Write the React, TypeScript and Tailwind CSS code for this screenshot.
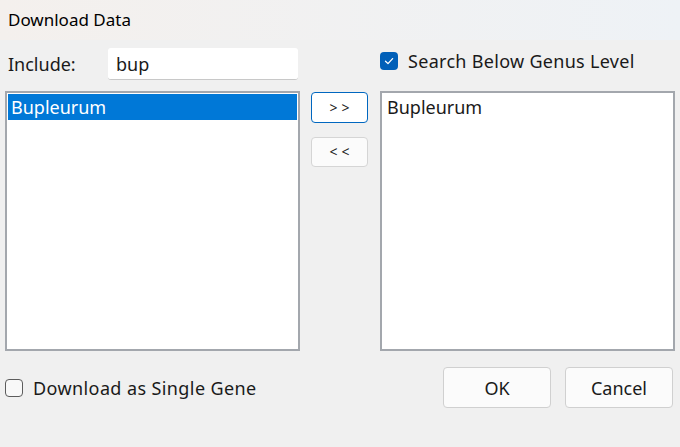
import React from "react";

export default function App() {
  const font = { fontFamily: '"Noto Sans", "Open Sans", sans-serif' };
  return (
    <div className="w-[680px] h-[447px] bg-[#f0f0f0] flex flex-col text-[18px] leading-[24px] text-[#1a1a1a] overflow-hidden" style={font}>
      <div className="h-[40px] shrink-0 flex items-center px-[8px] bg-gradient-to-r from-[#f4f0ed] to-[#eef2f6] text-[17px] text-black">
        Download Data
      </div>
      <div className="flex pl-[5px]">
        {/* left column */}
        <div className="w-[295px] flex flex-col pt-[8px]">
          <div className="flex items-center h-[32px]">
            <span className="pl-[3px] w-[103px]">Include:</span>
            <div className="w-[190px] h-[32px] bg-white rounded-[3px] border-b border-[#c8c8c8] flex items-center px-[8px]">bup</div>
          </div>
          <div className="mt-[11px] h-[260px] bg-white border-2 border-[#a3a7ad] p-[1px]">
            <div className="h-[26px] bg-[#0078d7] text-white flex items-center px-[3px]">Bupleurum</div>
          </div>
          <label className="mt-[28px] flex items-center gap-[10px] h-[18px]">
            <span className="w-[18px] h-[18px] shrink-0 rounded-[4px] border border-[#5c5c5c] bg-[#f8f8f8]" />
            <span className="whitespace-nowrap tracking-[0.4px]">Download as Single Gene</span>
          </label>
        </div>
        {/* middle column */}
        <div className="ml-[11px] w-[57px] flex flex-col pt-[52px]">
          <button className="h-[31px] rounded-[4px] border border-[#0067c0] bg-white text-[14px] tracking-[4px] pl-[4px] flex items-center justify-center">&gt;&gt;</button>
          <button className="mt-[14px] h-[30px] rounded-[4px] border border-[#d5d5d5] bg-[#fbfbfb] text-[14px] tracking-[4px] pl-[4px] flex items-center justify-center">&lt;&lt;</button>
        </div>
        {/* right column */}
        <div className="ml-[12px] w-[295px] flex flex-col pt-[12px]">
          <label className="flex items-center gap-[10px] h-[18px]">
            <span className="w-[18px] h-[18px] shrink-0 rounded-[4px] bg-[#005fb8] flex items-center justify-center">
              <svg width="12" height="12" viewBox="0 0 12 12" fill="none">
                <path d="M2.5 6.2 L5 8.6 L9.6 3.6" stroke="white" strokeWidth="1.3" strokeLinecap="round" strokeLinejoin="round" />
              </svg>
            </span>
            <span className="whitespace-nowrap tracking-[0.3px]">Search Below Genus Level</span>
          </label>
          <div className="mt-[21px] h-[260px] bg-white border-2 border-[#a3a7ad] px-[5px] pt-[2px]">
            Bupleurum
          </div>
          <div className="mt-[16px] flex justify-end gap-[14px] pr-[2px]">
            <button className="w-[108px] h-[41px] rounded-[4px] border border-[#d0d0d0] bg-[#fbfbfb]">OK</button>
            <button className="w-[108px] h-[41px] rounded-[4px] border border-[#d0d0d0] bg-[#fbfbfb]">Cancel</button>
          </div>
        </div>
      </div>
    </div>
  );
}
